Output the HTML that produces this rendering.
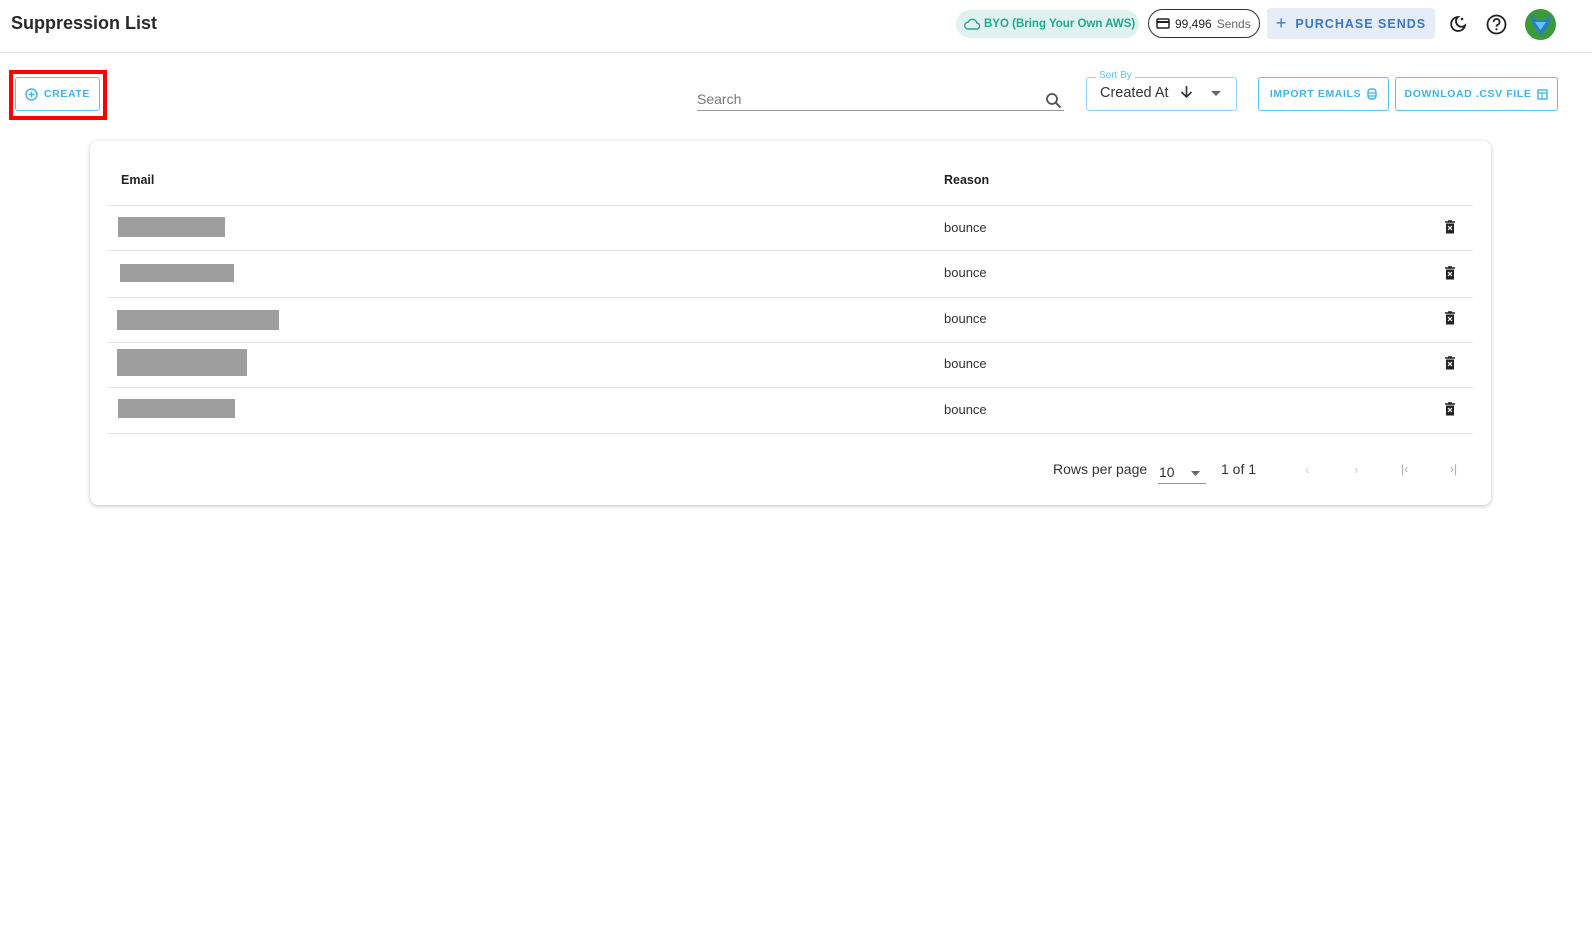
<!DOCTYPE html>
<html><head><style>
*{box-sizing:border-box;margin:0;padding:0}
body{width:1592px;height:949px;background:#fff;font-family:"Liberation Sans",Arial,sans-serif;position:relative;overflow:hidden;color:#222}
.a{position:absolute;white-space:nowrap}
.btn{position:absolute;border:1.5px solid #5fc3ef;border-radius:3px;color:#3fb3e8;font-size:10.5px;font-weight:bold;letter-spacing:0.6px;display:flex;align-items:center;justify-content:center;gap:6px;white-space:nowrap}
.row{position:absolute;left:107px;width:1366px;border-top:1px solid #e2e2e2}
.blk{position:absolute;background:#9e9e9e}
.reason{position:absolute;left:944px;font-size:13px;color:#333}
.trash{position:absolute;left:1444px}
</style></head><body>
<div class="a" style="left:11px;top:13px;font-size:18px;font-weight:bold;color:#2a2a2a">Suppression List</div>
<div class="a" style="left:0;top:52px;width:1592px;border-top:1.5px solid #e4e4e4"></div>

<div class="a" style="left:956px;top:10px;width:183px;height:28px;border-radius:14px;background:#e0f2ef;color:#20a88e;font-size:11.5px;font-weight:bold;display:flex;align-items:center;padding-left:8px;gap:4px">
<svg width="16" height="12" viewBox="0 0 16 12"><path d="M4 11h8.5a3 3 0 0 0 .3-6A4.5 4.5 0 0 0 4.2 4.2 3.4 3.4 0 0 0 4 11z" fill="none" stroke="#20a88e" stroke-width="1.4"/></svg>BYO (Bring Your Own AWS)</div>
<div class="a" style="left:1148px;top:9px;width:112px;height:29px;border-radius:15px;border:1.5px solid #333;font-size:12px;display:flex;align-items:center;padding-left:7px;gap:5px;color:#222">
<svg width="14" height="11" viewBox="0 0 14 11"><rect x="1" y="1" width="12" height="9" rx="1" fill="none" stroke="#222" stroke-width="1.5"/><rect x="1" y="3" width="12" height="2" fill="#222"/></svg>99,496 <span style="color:#666">Sends</span></div>
<div class="a" style="left:1267px;top:8px;width:168px;height:31px;background:#e6edf8;border-radius:3px;color:#3a78c4;font-size:12.5px;font-weight:bold;letter-spacing:1px;display:flex;align-items:center;justify-content:center;gap:8px"><span style="font-size:18px;font-weight:normal">+</span>PURCHASE SENDS</div>
<svg class="a" style="left:1449px;top:15px" width="18" height="18" viewBox="0 0 18 18"><path d="M9 2a7 7 0 1 0 7 8.5A5.5 5.5 0 0 1 9 2z" fill="none" stroke="#222" stroke-width="1.8"/><circle cx="13" cy="4" r="1.3" fill="#222"/></svg>
<svg class="a" style="left:1486px;top:14px" width="21" height="21" viewBox="0 0 21 21"><circle cx="10.5" cy="10.5" r="9" fill="none" stroke="#222" stroke-width="1.8"/><path d="M7.6 8a3 3 0 1 1 4 2.8c-.8.4-1.1.9-1.1 1.8" fill="none" stroke="#222" stroke-width="1.8"/><circle cx="10.5" cy="15.3" r="1.1" fill="#222"/></svg>
<div class="a" style="left:1525px;top:9px;width:31px;height:31px;border-radius:50%;background:#3b9a3a;overflow:hidden"><svg width="31" height="31" viewBox="0 0 31 31"><path d="M5 6l7 5h7l7-5-2 10-8 11-8-11z" fill="#2a7fc0"/><path d="M10 13h11l-5.5 8z" fill="#5cc8f0"/></svg></div>

<div class="a" style="left:9px;top:70px;width:98px;height:50px;border:4px solid #f00"></div>
<div class="btn" style="left:15px;top:77px;width:85px;height:34px"><svg width="13" height="13" viewBox="0 0 13 13"><circle cx="6.5" cy="6.5" r="5.5" fill="none" stroke="#3fb3e8" stroke-width="1.4"/><path d="M6.5 3.5v6M3.5 6.5h6" stroke="#3fb3e8" stroke-width="1.4"/></svg>CREATE</div>

<div class="a" style="left:697px;top:91px;font-size:14px;color:#777">Search</div>
<div class="a" style="left:697px;top:110px;width:367px;border-top:1px solid #999"></div>
<svg class="a" style="left:1045px;top:92px" width="17" height="17" viewBox="0 0 17 17"><circle cx="7" cy="7" r="5" fill="none" stroke="#555" stroke-width="1.8"/><path d="M10.5 10.5l5 5" stroke="#555" stroke-width="2"/></svg>

<div class="a" style="left:1086px;top:77px;width:151px;height:34px;border:1px solid #8ed3f2;border-radius:3px"></div>
<div class="a" style="left:1096px;top:70px;background:#fff;padding:0 3px;font-size:10px;color:#5fc3ef">Sort By</div>
<div class="a" style="left:1100px;top:85px;font-size:14.5px;color:#333">Created At</div>
<svg class="a" style="left:1180px;top:85px" width="13" height="14" viewBox="0 0 13 14"><path d="M6.5 1v11M1.5 7l5 5 5-5" fill="none" stroke="#333" stroke-width="1.6"/></svg>
<svg class="a" style="left:1211px;top:91px" width="10" height="6"><path d="M0 0h10L5 5z" fill="#666"/></svg>

<div class="btn" style="left:1258px;top:77px;width:131px;height:34px">IMPORT EMAILS <svg width="10" height="12" viewBox="0 0 10 12"><rect x="1" y="1" width="8" height="10" rx="3" fill="none" stroke="#3fb3e8" stroke-width="1.4"/><path d="M1 5h8M1 8h8" stroke="#3fb3e8" stroke-width="1.2"/></svg></div>
<div class="btn" style="left:1395px;top:77px;width:163px;height:34px">DOWNLOAD .CSV FILE <svg width="11" height="11" viewBox="0 0 11 11"><rect x="1" y="1" width="9" height="9" fill="none" stroke="#3fb3e8" stroke-width="1.4"/><path d="M1 4h9M5 4v6" stroke="#3fb3e8" stroke-width="1.2"/></svg></div>

<div class="a" style="left:90px;top:141px;width:1401px;height:364px;border-radius:8px;box-shadow:0 1px 4px rgba(0,0,0,.25);background:#fff"></div>
<div class="a" style="left:121px;top:173px;font-size:12.5px;font-weight:bold">Email</div>
<div class="a" style="left:944px;top:173px;font-size:12.5px;font-weight:bold">Reason</div>
<div class="row" style="top:205px"></div>
<div class="row" style="top:250px"></div>
<div class="row" style="top:297px"></div>
<div class="row" style="top:342px"></div>
<div class="row" style="top:387px"></div>
<div class="row" style="top:433px"></div>
<div class="blk" style="left:118px;top:217px;width:107px;height:20px"></div>
<div class="blk" style="left:120px;top:264px;width:114px;height:18px"></div>
<div class="blk" style="left:117px;top:310px;width:162px;height:20px"></div>
<div class="blk" style="left:117px;top:349px;width:130px;height:27px"></div>
<div class="blk" style="left:118px;top:399px;width:117px;height:19px"></div>
<div class="reason" style="top:220px">bounce</div>
<div class="reason" style="top:265px">bounce</div>
<div class="reason" style="top:311px">bounce</div>
<div class="reason" style="top:356px">bounce</div>
<div class="reason" style="top:402px">bounce</div>
<svg class="trash" style="top:220px" width="12" height="14" viewBox="0 0 12 14"><path d="M1 2h10M4 1h4" stroke="#222" stroke-width="1.6"/><path d="M2 3.5h8v10H2z" fill="#222"/><path d="M4 6l4 4M8 6l-4 4" stroke="#fff" stroke-width="1.2"/></svg>
<svg class="trash" style="top:266px" width="12" height="14" viewBox="0 0 12 14"><path d="M1 2h10M4 1h4" stroke="#222" stroke-width="1.6"/><path d="M2 3.5h8v10H2z" fill="#222"/><path d="M4 6l4 4M8 6l-4 4" stroke="#fff" stroke-width="1.2"/></svg>
<svg class="trash" style="top:311px" width="12" height="14" viewBox="0 0 12 14"><path d="M1 2h10M4 1h4" stroke="#222" stroke-width="1.6"/><path d="M2 3.5h8v10H2z" fill="#222"/><path d="M4 6l4 4M8 6l-4 4" stroke="#fff" stroke-width="1.2"/></svg>
<svg class="trash" style="top:356px" width="12" height="14" viewBox="0 0 12 14"><path d="M1 2h10M4 1h4" stroke="#222" stroke-width="1.6"/><path d="M2 3.5h8v10H2z" fill="#222"/><path d="M4 6l4 4M8 6l-4 4" stroke="#fff" stroke-width="1.2"/></svg>
<svg class="trash" style="top:402px" width="12" height="14" viewBox="0 0 12 14"><path d="M1 2h10M4 1h4" stroke="#222" stroke-width="1.6"/><path d="M2 3.5h8v10H2z" fill="#222"/><path d="M4 6l4 4M8 6l-4 4" stroke="#fff" stroke-width="1.2"/></svg>

<div class="a" style="left:1053px;top:461px;font-size:14px;color:#333">Rows per page</div>
<div class="a" style="left:1159px;top:464px;font-size:14px;color:#333">10</div>
<svg class="a" style="left:1191px;top:471px" width="9" height="5"><path d="M0 0h9L4.5 5z" fill="#666"/></svg>
<div class="a" style="left:1158px;top:483px;width:48px;border-top:1px solid #999"></div>
<div class="a" style="left:1221px;top:461px;font-size:14px;color:#333">1 of 1</div>
<div class="a" style="left:1305px;top:462px;font-size:13px;color:#ccc">&lsaquo;</div>
<div class="a" style="left:1354px;top:462px;font-size:13px;color:#ccc">&rsaquo;</div>
<div class="a" style="left:1401px;top:462px;font-size:12px;color:#aaa">|&lsaquo;</div>
<div class="a" style="left:1450px;top:462px;font-size:12px;color:#aaa">&rsaquo;|</div>
</body></html>
